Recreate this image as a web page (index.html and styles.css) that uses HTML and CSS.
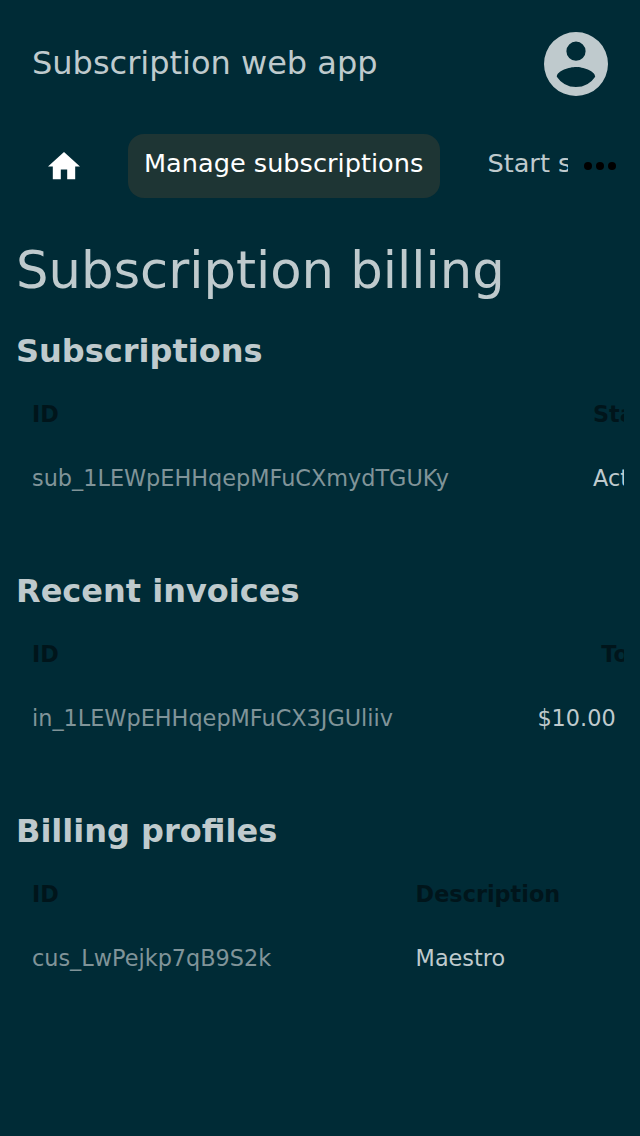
FILE: index.html
```html
<!DOCTYPE html>
<html lang="en">
<head>
<meta charset="utf-8">
<title>Subscription web app</title>
<link rel="stylesheet" href="styles.css">
</head>
<body>
<header class="topbar">
  <div class="brand">Subscription web app</div>
  <svg class="avatar" viewBox="2 2 20 20"><path fill-rule="evenodd" d="M12 2a10 10 0 1 0 0 20 10 10 0 0 0 0-20zm0 3a3 3 0 1 1 0 6 3 3 0 0 1 0-6zm0 14.200a7.200 7.200 0 0 1-6-3.220c.03-1.990 4-3.080 6-3.080s5.970 1.090 6 3.080a7.200 7.200 0 0 1-6 3.220z"/></svg>
</header>
<nav class="tabs">
  <div class="tab-list">
    <a class="tab home"><svg viewBox="2 3 20 17"><path d="M10 20v-6h4v6h5v-8h3L12 3 2 12h3v8z"/></svg></a>
    <a class="tab active">Manage subscriptions</a>
    <a class="tab">Start subscription</a>
  </div>
  <svg class="more" viewBox="0 0 32 8"><circle cx="4" cy="4" r="4"/><circle cx="16" cy="4" r="4"/><circle cx="28" cy="4" r="4"/></svg>
</nav>
<main class="content">
  <h1>Subscription billing</h1>
  <section>
    <h2>Subscriptions</h2>
    <div class="table subs">
      <div class="row head"><span>ID</span><span>Status</span></div>
      <div class="row"><a>sub_1LEWpEHHqepMFuCXmydTGUKy</a><span>Active</span></div>
    </div>
  </section>
  <section>
    <h2>Recent invoices</h2>
    <div class="table invoices">
      <div class="row head"><span>ID</span><span>Total</span></div>
      <div class="row"><a>in_1LEWpEHHqepMFuCX3JGUliiv</a><span class="amount">$10.00</span></div>
    </div>
  </section>
  <section>
    <h2>Billing profiles</h2>
    <div class="table profiles">
      <div class="row head"><span>ID</span><span>Description</span></div>
      <div class="row"><a>cus_LwPejkp7qB9S2k</a><span>Maestro</span></div>
    </div>
  </section>
</main>
</body>
</html>
```
FILE: styles.css
```css
* { box-sizing: border-box; }
body {
  margin: 0;
  min-height: 1136px;
  background: #002b36;
  color: #bfcacd;
  font-family: "DejaVu Sans", sans-serif;
  overflow-x: hidden;
}
.topbar {
  display: flex;
  align-items: center;
  justify-content: space-between;
  height: 128px;
  padding: 0 32px;
}
.brand { font-size: 32px; line-height: 48px; padding-bottom: 2px; }
.avatar { width: 64px; height: 64px; fill: #bfcacd; }
.tabs {
  display: flex;
  align-items: center;
  height: 76px;
  padding: 0 24px 0 32px;
}
.tab-list {
  display: flex;
  gap: 32px;
  width: 536px;
  overflow: hidden;
}
.tab {
  flex: none;
  height: 64px;
  padding: 0 16px;
  border-radius: 16px;
  font-size: 25.6px;
  line-height: 59px;
  white-space: nowrap;
}
.home { display: flex; align-items: center; }
.home svg { width: 32px; height: 27.2px; fill: #fff; }
.active { min-width: 312px; margin-right: -0.6px; background: #1e3534; color: #fff; }
.more { width: 32px; height: 8px; margin-left: 16px; }
.content { padding: 31px 16px; }
h1 {
  margin: 0;
  font-size: 51.2px;
  line-height: 70px;
  font-weight: 400;
}
h2 {
  margin: 0;
  font-size: 32px;
  line-height: 48px;
}
section { height: 240px; overflow: hidden; }
h1 + section { margin-top: 22px; }
.table { margin-top: 8px; overflow: hidden; font-size: 22.36px; }
.row { display: grid; line-height: 64px; white-space: nowrap; padding-left: 16px; }
.head { height: 63px; font-weight: 700; color: #00151b; line-height: 62px; }
.row a { color: #809499; }
.subs .row { grid-template-columns: 561px 200px; }
.invoices .row { grid-template-columns: 505.4px 125px; }
.invoices .head span:last-child { text-align: right; }
.profiles .row { grid-template-columns: 383.6px 200px; }
```
